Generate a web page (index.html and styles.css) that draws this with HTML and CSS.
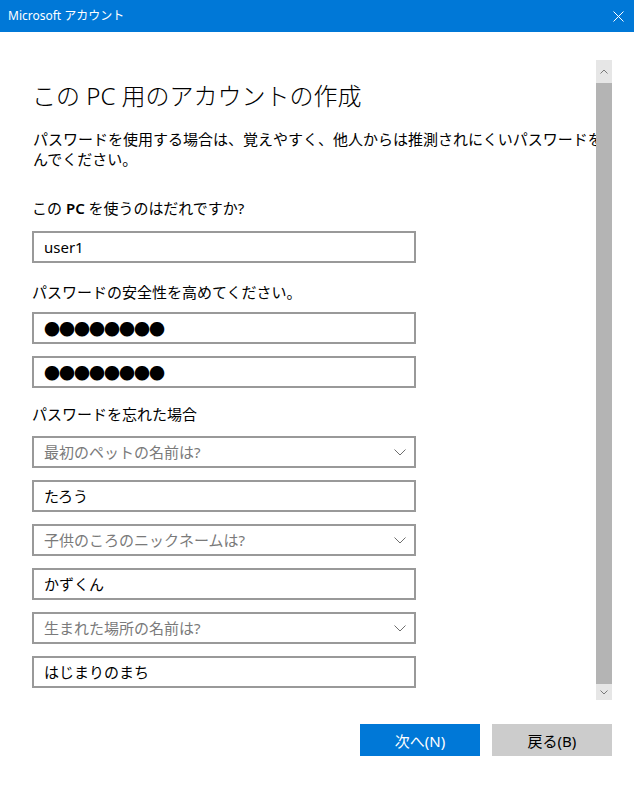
FILE: index.html
```html
<!DOCTYPE html>
<html lang="ja">
<head>
<meta charset="utf-8">
<title>Microsoft アカウント</title>
<link rel="stylesheet" href="styles.css">
</head>
<body>
<div class="window">
  <header class="titlebar">
    <span class="title">Microsoft アカウント</span>
    <svg class="close" width="11" height="11" viewBox="0 0 11 11"><path d="M0.5 0.5 L10.5 10.5 M10.5 0.5 L0.5 10.5" stroke="#fff" stroke-width="1" fill="none"/></svg>
  </header>
  <div class="main">
    <div class="content">
      <h1 class="heading">この PC 用のアカウントの作成</h1>
      <p class="intro">パスワードを使用する場合は、覚えやすく、他人からは推測されにくいパスワードをんでください。</p>
      <div class="label label-first">この <b>PC</b> を使うのはだれですか?</div>
      <div class="field field-first">user1</div>
      <div class="label label-second">パスワードの安全性を高めてください。</div>
      <div class="field field-tight password">●●●●●●●●</div>
      <div class="field password">●●●●●●●●</div>
      <div class="label label-third">パスワードを忘れた場合</div>
      <div class="field select">
        <span class="placeholder">最初のペットの名前は?</span>
        <svg class="chevron" width="12" height="7" viewBox="0 0 12 7"><path d="M0.5 0.5 L6 6 L11.5 0.5" stroke="#6e6e6e" stroke-width="1" fill="none"/></svg>
      </div>
      <div class="field">たろう</div>
      <div class="field select">
        <span class="placeholder">子供のころのニックネームは?</span>
        <svg class="chevron" width="12" height="7" viewBox="0 0 12 7"><path d="M0.5 0.5 L6 6 L11.5 0.5" stroke="#6e6e6e" stroke-width="1" fill="none"/></svg>
      </div>
      <div class="field">かずくん</div>
      <div class="field select">
        <span class="placeholder">生まれた場所の名前は?</span>
        <svg class="chevron" width="12" height="7" viewBox="0 0 12 7"><path d="M0.5 0.5 L6 6 L11.5 0.5" stroke="#6e6e6e" stroke-width="1" fill="none"/></svg>
      </div>
      <div class="field">はじまりのまち</div>
    </div>
    <div class="scrollbar">
      <div class="sb-btn">
        <svg width="8" height="5" viewBox="0 0 8 5"><path d="M0.5 4.5 L4 1 L7.5 4.5" stroke="#7a7a7a" stroke-width="1" fill="none"/></svg>
      </div>
      <div class="sb-thumb"></div>
      <div class="sb-btn sb-btn-down">
        <svg width="8" height="5" viewBox="0 0 8 5"><path d="M0.5 0.5 L4 4 L7.5 0.5" stroke="#7a7a7a" stroke-width="1" fill="none"/></svg>
      </div>
    </div>
  </div>
  <footer class="footer">
    <button class="btn btn-primary">次へ(N)</button>
    <button class="btn btn-secondary">戻る(B)</button>
  </footer>
</div>
</body>
</html>
```

FILE: styles.css
```css
* {
  box-sizing: border-box;
}

html, body {
  margin: 0;
  padding: 0;
  background: #ffffff;
}

body {
  font-family: "Noto Sans", "Noto Sans CJK JP", sans-serif;
  color: #000000;
}

.window {
  width: 634px;
  height: 785px;
  display: flex;
  flex-direction: column;
  overflow: hidden;
}

.titlebar {
  height: 32px;
  background: #0078d7;
  display: flex;
  align-items: center;
  justify-content: space-between;
  padding: 0 10px 0 8px;
  flex: none;
}

.title {
  color: #ffffff;
  font-size: 12px;
  line-height: 16px;
}

.close {
  display: block;
}

.main {
  display: flex;
  height: 668px;
  flex: none;
}

.content {
  flex: 1;
  min-width: 0;
  padding-left: 32px;
}

.heading {
  margin: 48px 0 0 0;
  font-size: 24px;
  line-height: 32px;
  font-weight: 300;
  font-family: "Noto Sans", "Noto Sans CJK JP", sans-serif;
  white-space: nowrap;
}

.intro {
  margin: 17px 0 0 1px;
  width: 572px;
  font-size: 15px;
  line-height: 20px;
}

.label {
  font-size: 15px;
  line-height: 20px;
  white-space: nowrap;
}

.label b {
  font-weight: 600;
}

.label-first {
  margin-top: 29px;
}

.label-second {
  margin-top: 19px;
}

.label-third {
  margin-top: 16px;
}

.field {
  width: 384px;
  height: 32px;
  border: 2px solid #999999;
  margin-top: 12px;
  padding: 0 10px;
  display: flex;
  align-items: center;
  font-size: 15px;
  line-height: 20px;
  color: #000000;
}

.field-first {
  margin-top: 13px;
}

.field-tight {
  margin-top: 10px;
}

.password {
  font-family: "Noto Sans CJK JP", sans-serif;
  font-size: 16px;
  letter-spacing: -1px;
}

.select {
  justify-content: space-between;
  padding-right: 8px;
}

.placeholder {
  color: #7a7a7a;
}

.chevron {
  display: block;
}

.scrollbar {
  width: 16px;
  margin: 28px 22px 0 0;
  height: 640px;
  background: #e6e6e6;
  display: flex;
  flex-direction: column;
  flex: none;
}

.sb-btn {
  height: 23px;
  display: flex;
  align-items: center;
  justify-content: center;
  flex: none;
}

.sb-btn-down {
  height: 16px;
}

.sb-thumb {
  flex: 1;
  background: #b4b4b4;
}

.footer {
  display: flex;
  justify-content: flex-end;
  gap: 12px;
  padding: 24px 22px 0 0;
}

.btn {
  width: 120px;
  height: 32px;
  border: none;
  font-family: "Noto Sans", "Noto Sans CJK JP", sans-serif;
  font-size: 15px;
  padding: 0;
}

.btn-primary {
  background: #0078d7;
  color: #ffffff;
}

.btn-secondary {
  background: #cccccc;
  color: #000000;
}
```
